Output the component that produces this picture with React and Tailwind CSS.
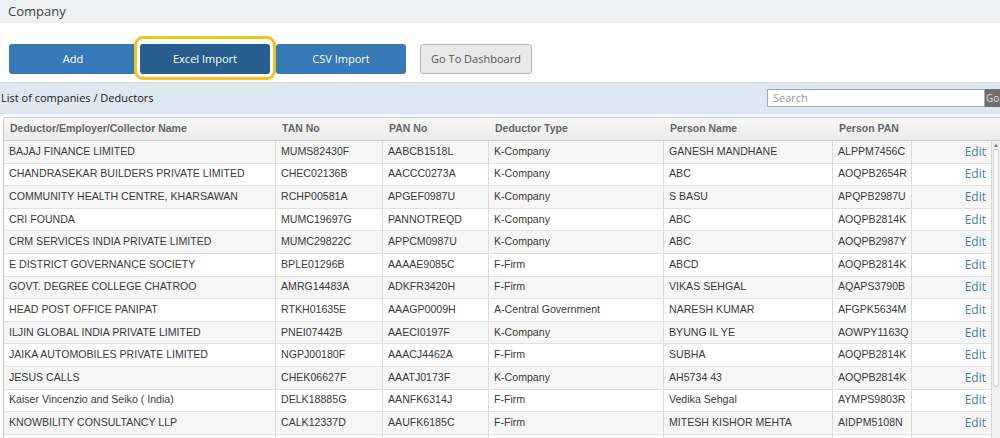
import React from "react";

const rows = [
  ["BAJAJ FINANCE LIMITED", "MUMS82430F", "AABCB1518L", "K-Company", "GANESH MANDHANE", "ALPPM7456C"],
  ["CHANDRASEKAR BUILDERS PRIVATE LIMITED", "CHEC02136B", "AACCC0273A", "K-Company", "ABC", "AOQPB2654R"],
  ["COMMUNITY HEALTH CENTRE, KHARSAWAN", "RCHP00581A", "APGEF0987U", "K-Company", "S BASU", "APQPB2987U"],
  ["CRI FOUNDA", "MUMC19697G", "PANNOTREQD", "K-Company", "ABC", "AOQPB2814K"],
  ["CRM SERVICES INDIA PRIVATE LIMITED", "MUMC29822C", "APPCM0987U", "K-Company", "ABC", "AOQPB2987Y"],
  ["E DISTRICT GOVERNANCE SOCIETY", "BPLE01296B", "AAAAE9085C", "F-Firm", "ABCD", "AOQPB2814K"],
  ["GOVT. DEGREE COLLEGE CHATROO", "AMRG14483A", "ADKFR3420H", "F-Firm", "VIKAS SEHGAL", "AQAPS3790B"],
  ["HEAD POST OFFICE PANIPAT", "RTKH01635E", "AAAGP0009H", "A-Central Government", "NARESH KUMAR", "AFGPK5634M"],
  ["ILJIN GLOBAL INDIA PRIVATE LIMITED", "PNEI07442B", "AAECI0197F", "K-Company", "BYUNG IL YE", "AOWPY1163Q"],
  ["JAIKA AUTOMOBILES PRIVATE LIMITED", "NGPJ00180F", "AAACJ4462A", "F-Firm", "SUBHA", "AOQPB2814K"],
  ["JESUS CALLS", "CHEK06627F", "AAATJ0173F", "K-Company", "AH5734 43", "AOQPB2814K"],
  ["Kaiser Vincenzio and Seiko ( India)", "DELK18885G", "AANFK6314J", "F-Firm", "Vedika Sehgal", "AYMPS9803R"],
  ["KNOWBILITY CONSULTANCY LLP", "CALK12337D", "AAUFK6185C", "F-Firm", "MITESH KISHOR MEHTA", "AIDPM5108N"],
  ["", "", "", "", "", ""],
];

const widths = ["w-[272px]", "w-[107px]", "w-[106px]", "w-[175px]", "w-[169px]", "w-[79px]"];
const heads = ["Deductor/Employer/Collector Name", "TAN No", "PAN No", "Deductor Type", "Person Name", "Person PAN"];

export default function App() {
  return (
    <div className="w-[1000px] h-[438px] overflow-hidden bg-white font-['Open_Sans',sans-serif]">
      <div className="h-[23px] bg-[#eef0f2] pl-[8px] flex items-center text-[13px] text-[#444]">Company</div>
      <div className="h-[59px] bg-white flex items-start pt-[21px] pl-[9px]">
        <button className="w-[128px] h-[30px] rounded-[3px] bg-[#3579b6] text-white text-[11px]">Add</button>
        <div className="-ml-[3px] -mt-[8px] pt-[5px] px-[3px] pb-[3px] border-[3px] border-[#f4c21a] rounded-[9px]">
          <button className="w-[130px] h-[30px] rounded-[3px] bg-[#285e8e] text-white text-[11px] block">Excel Import</button>
        </div>
        <button className="w-[130px] h-[30px] rounded-[3px] bg-[#3579b6] text-white text-[11px]">CSV Import</button>
        <button className="ml-[14px] w-[112px] h-[30px] rounded-[3px] bg-[#e9e9e9] border border-[#b8b8b8] text-[#555] text-[11px]">Go To Dashboard</button>
      </div>
      <div className="h-[31px] bg-[#dfe7f1] border-t border-[#d3dce7] flex items-center pl-[1px] text-[11px] text-[#222]">
        <span className="flex-1">List of companies / Deductors</span>
        <div className="flex items-center h-[18px]">
          <div className="w-[218px] h-[18px] bg-white border border-[#a9a9a9] pl-[5px] flex items-center text-[11px] text-[#999]">Search</div>
          <div className="w-[15px] h-[18px] bg-[#6e6e6e] text-[#ddd] text-[10px] pl-[1px] flex items-center overflow-hidden whitespace-nowrap">Go</div>
        </div>
      </div>
      <div className="h-[4px] bg-[#f4f6f9] border-t border-[#d6dde6]"></div>
      <div className="ml-[3px] border-l border-t border-[#c9c9c9] rounded-tl-[3px] font-['Liberation_Sans',Arial,sans-serif]">
        <div className="flex h-[23px] bg-gradient-to-b from-[#f8f8f8] to-[#ebebeb] border-b border-[#d0d0d0] text-[10.5px] font-bold text-[#666]">
          {heads.map((h, i) => (
            <div key={i} className={`${widths[i]} pl-[6px] flex items-center`}>{h}</div>
          ))}
          <div className="flex-1"></div>
        </div>
        <div className="flex">
          <div className="w-[987px]">
            {rows.map((r, ri) => (
              <div key={ri} className={`flex h-[22.6px] border-b border-[#e2e2e2] text-[10.6px] text-[#3a3a3a] ${ri % 2 === 0 ? "bg-[#f6f6f6]" : "bg-white"}`}>
                {r.map((c, ci) => (
                  <div key={ci} className={`${widths[ci]} pl-[5px] flex items-center border-r border-[#dcdcdc] whitespace-nowrap overflow-hidden`}>{c}</div>
                ))}
                <div className="w-[79px] flex items-center justify-end pr-[5px] font-['Open_Sans',sans-serif] text-[12px] text-[#4d7ca6]">{ri < 13 ? "Edit" : ""}</div>
              </div>
            ))}
          </div>
          <div className="w-[10px] bg-[#f0f0f0] border-l border-[#d8d8d8]">
            <div className="h-[8px] flex items-center justify-center text-[6px] text-[#777]">▲</div>
            <div className="mx-[1px] h-[238px] bg-[#f7f7f7] border border-[#d2d2d2] rounded-[2px]"></div>
          </div>
        </div>
      </div>
    </div>
  );
}
